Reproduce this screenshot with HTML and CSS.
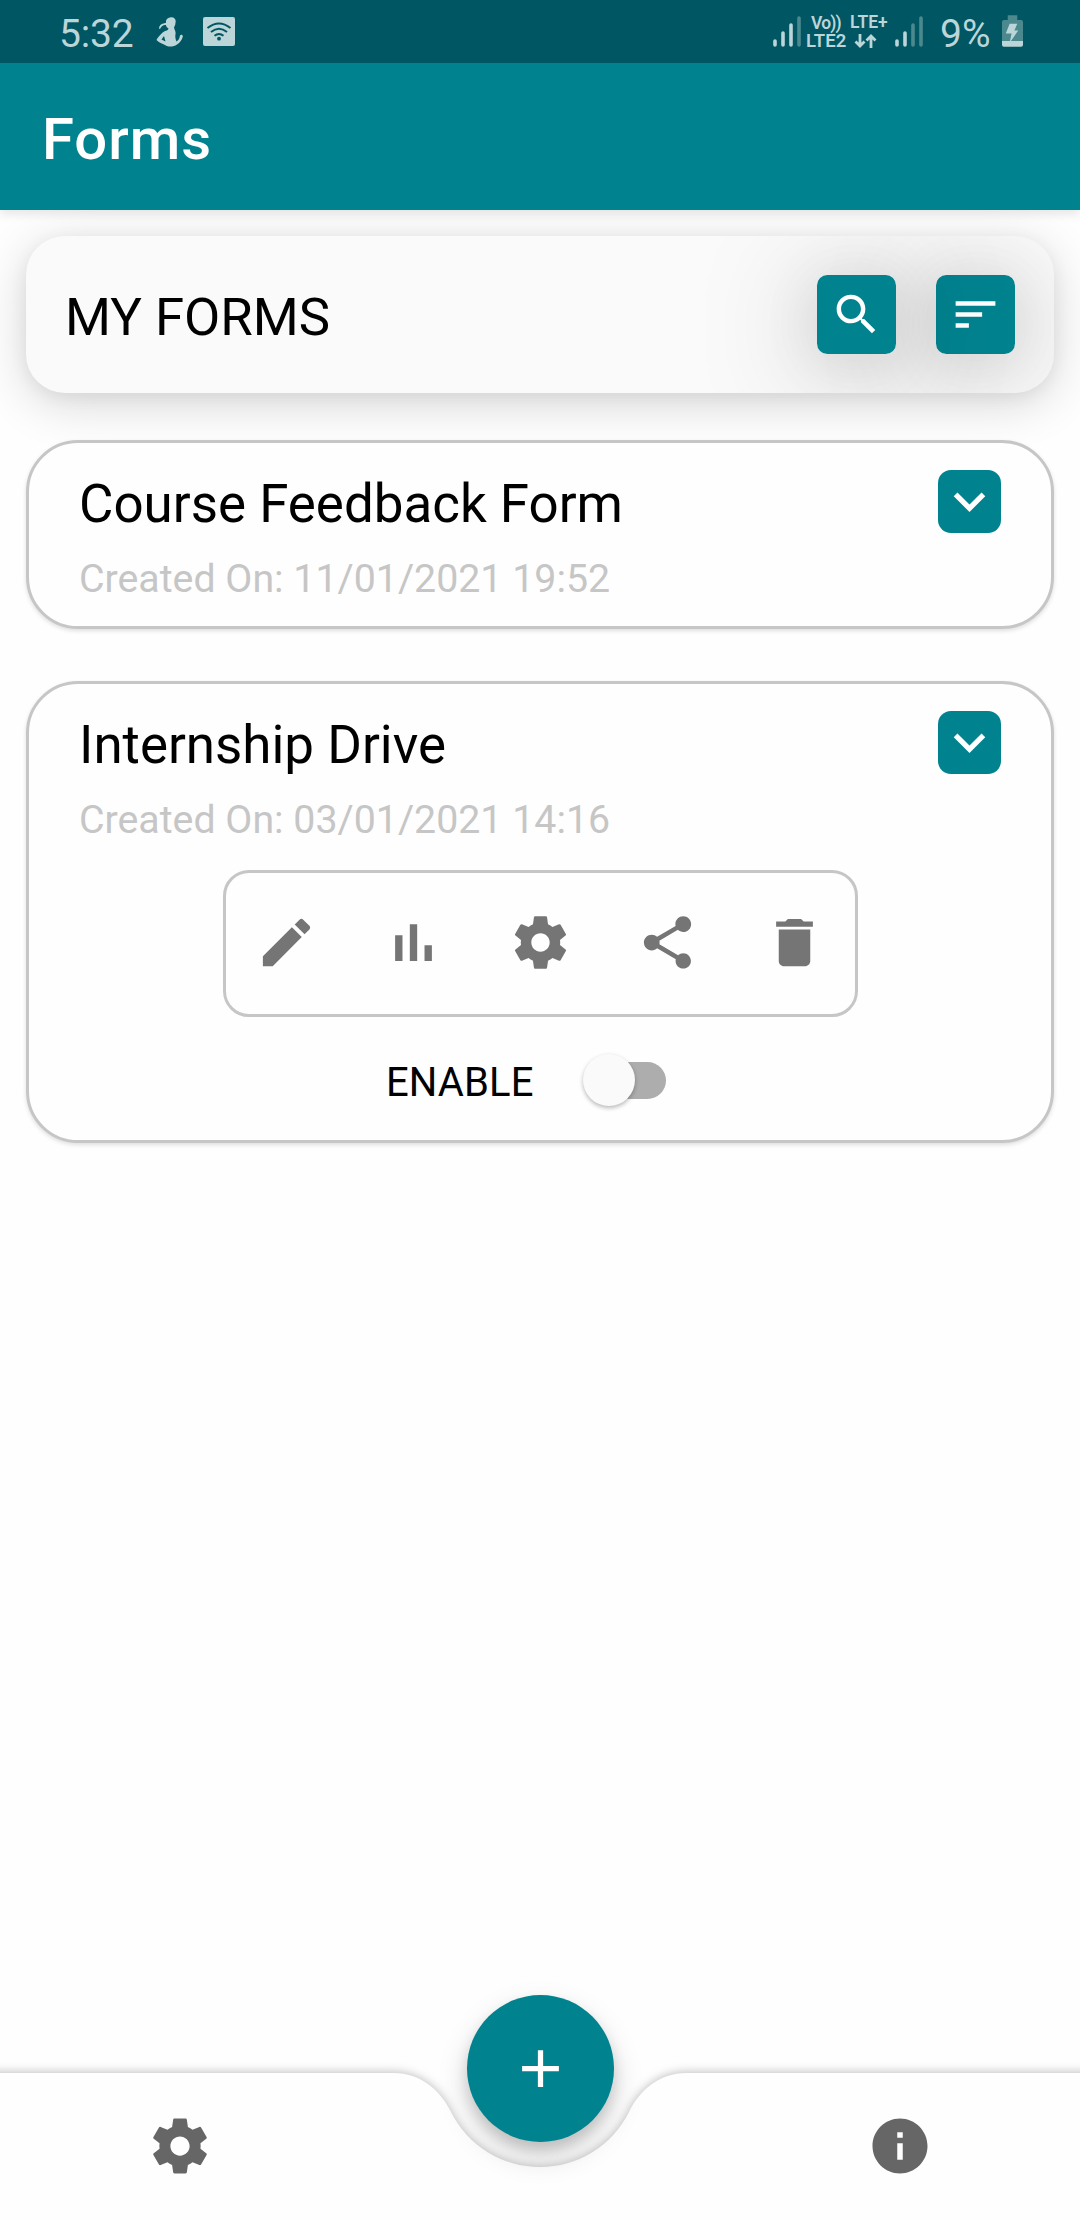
FILE: index.html
```html
<!DOCTYPE html>
<html lang="en">
<head>
<meta charset="utf-8">
<title>Forms</title>
<link rel="stylesheet" href="styles.css">
</head>
<body>
<svg class="defs" aria-hidden="true">
  <symbol id="gear" viewBox="0 0 24 24"><path d="M19.43 12.98c.04-.32.07-.64.07-.98s-.03-.66-.07-.98l2.11-1.65c.19-.15.24-.42.12-.64l-2-3.46c-.12-.22-.39-.3-.61-.22l-2.49 1c-.52-.4-1.08-.73-1.69-.98l-.38-2.65C14.46 2.18 14.25 2 14 2h-4c-.25 0-.46.18-.49.42l-.38 2.65c-.61.25-1.17.59-1.69.98l-2.49-1c-.23-.09-.49 0-.61.22l-2 3.46c-.13.22-.07.49.12.64l2.11 1.65c-.04.32-.07.65-.07.98s.03.66.07.98l-2.11 1.65c-.19.15-.24.42-.12.64l2 3.46c.12.22.39.3.61.22l2.49-1c.52.4 1.08.73 1.69.98l.38 2.65c.03.24.24.42.49.42h4c.25 0 .46-.18.49-.42l.38-2.65c.61-.25 1.17-.59 1.69-.98l2.49 1c.23.09.49 0 .61-.22l2-3.46c.12-.22.07-.49-.12-.64l-2.11-1.65zM12 15.5c-1.93 0-3.5-1.57-3.5-3.5s1.57-3.5 3.5-3.5 3.5 1.57 3.5 3.5-1.57 3.5-3.5 3.5z"/></symbol>
  <symbol id="chevron" viewBox="0 0 24 24"><path d="M7.41 8.59 12 13.17l4.59-4.58L18 10l-6 6-6-6z"/></symbol>
</svg>
<div class="screen">
  <header class="status">
    <div class="status-left">
      <span class="clock">5:32</span>
      <svg class="fitness" viewBox="0 0 28 30"><path fill-rule="evenodd" d="M14 0.500C18 -.5 20.500 2.500 19.500 5.500 19.500 8 18.500 9 18 10.500 18.500 13 20 14 19.500 17 19 20 19.500 22 20.500 24.500 23 23 23.500 21 24 18.500 25 17 27 17.500 26.800 19.500 26 23 24 25.500 21 27.500 17 30.500 11 30 8 27.500 5 26 2 25 .5 23 2 20 6 15.500 9 14 10.500 13.500 12 13.500 12.500 11.500 11 10.500 10 9.500 10 8 7.500 7.500 5.500 9 4 12 2.500 12 3 9 5 7.500 7 6.500 8.500 6 10 6 9.500 3 11 1 14 .5ZM8 19 5.500 22.500 9.500 24.500Z"/></svg>
      <svg class="wifi" viewBox="0 0 32 29"><rect width="32" height="29" rx="2"/><g><path d="M4.500 11q11.500-9 23 0M8 15q8-6.500 16 0M11.500 18.700q4.500-3.500 9 0"/></g><circle cx="16" cy="21.700" r="1.900"/></svg>
    </div>
    <div class="status-right">
      <svg class="bars" viewBox="0 0 28 31"><path d="M2 25v4M10 17v12M18 9v20"/><path class="dim" d="M26 2v27"/></svg>
      <div class="net">
        <span class="volte">Vo))</span><span>LTE+</span>
        <span class="lte2">LTE2</span><svg viewBox="0 0 24 16"><path d="M6 1v12M1.500 8.500 6 13l4.500-4.500M17 15V3M12.500 7.500 17 3l4.500 4.500"/></svg>
      </div>
      <svg class="bars bars-two" viewBox="0 0 28 31"><path d="M2 25v4M10 17v12"/><path class="dim" d="M18 9v20M26 2v27"/></svg>
      <span class="percent">9%</span>
      <svg class="battery" viewBox="0 0 22 34"><path class="dim-fill" d="M6 0h10v5h4q2 0 2 2v20H0V7q0-2 2-2h4z"/><path d="M0 27h22v4q0 2-2 2H2q-2 0-2-2zM8 9h8l-3 7h4L8 29l2-10H4z"/></svg>
    </div>
  </header>
  <div class="appbar"><h1>Forms</h1></div>
  <main>
    <section class="heading">
      <h2>MY FORMS</h2>
      <button class="tool"><svg viewBox="0 0 24 24"><path d="M15.500 14h-.79l-.28-.27A6.471 6.471 0 0 0 16 9.500 6.500 6.500 0 1 0 9.500 16c1.610 0 3.090-.59 4.230-1.570l.27.28v.79l5 4.990L20.490 19l-4.990-5zm-6 0C7.010 14 5 11.990 5 9.500S7.010 5 9.500 5 14 7.010 14 9.500 11.990 14 9.500 14z"/></svg></button>
      <button class="tool"><svg viewBox="0 0 24 24"><path d="M3 18h6v-2H3v2zM3 6v2h18V6H3zm0 7h12v-2H3v2z"/></svg></button>
    </section>
    <article class="card">
      <div class="info"><h3>Course Feedback Form</h3><p>Created On: 11/01/2021 19:52</p></div>
      <button class="expand"><svg><use href="#chevron"/></svg></button>
    </article>
    <article class="card open">
      <div class="info"><h3>Internship Drive</h3><p>Created On: 03/01/2021 14:16</p></div>
      <button class="expand"><svg><use href="#chevron"/></svg></button>
      <div class="actions">
        <svg viewBox="0 0 24 24"><path d="M3 17.250V21h3.750L17.810 9.940l-3.750-3.750L3 17.250zM20.710 7.040c.39-.39.39-1.020 0-1.410l-2.340-2.340c-.39-.39-1.020-.39-1.410 0l-1.830 1.830 3.750 3.750 1.830-1.830z"/></svg>
        <svg viewBox="0 0 24 24"><path d="M5 9.200h2.800V19H5zM10.600 5h2.800v14h-2.800zm5.600 8H19v6h-2.800z"/></svg>
        <svg><use href="#gear"/></svg>
        <svg viewBox="0 0 24 24"><path d="M18 16.080c-.76 0-1.440.3-1.960.77L8.910 12.700c.05-.23.09-.46.09-.7s-.04-.47-.09-.7l7.050-4.110c.54.5 1.250.81 2.040.81 1.660 0 3-1.340 3-3s-1.340-3-3-3-3 1.340-3 3c0 .24.04.47.09.7L8.040 9.810C7.500 9.310 6.790 9 6 9c-1.660 0-3 1.340-3 3s1.340 3 3 3c.79 0 1.500-.31 2.040-.81l7.120 4.160c-.05.21-.08.43-.08.65 0 1.610 1.310 2.920 2.920 2.920s2.920-1.310 2.920-2.920-1.310-2.920-2.920-2.920z"/></svg>
        <svg viewBox="0 0 24 24"><path d="M6 19c0 1.100.9 2 2 2h8c1.100 0 2-.9 2-2V7H6v12zM19 4h-3.500l-1-1h-5l-1 1H5v2h14V4z"/></svg>
      </div>
      <div class="toggle"><span>ENABLE</span><div class="switch"><i></i></div></div>
    </article>
  </main>
  <nav>
    <svg class="notch" viewBox="0 0 1080 147"><path d="M-20 0H394C420 0 440.500 17 451 39A99.500 99.500 0 0 0 629 39C639.500 17 660 0 686 0H1100V160H-20Z"/></svg>
    <svg class="nav-icon"><use href="#gear"/></svg>
    <svg class="nav-icon" viewBox="0 0 24 24"><path d="M12 2C6.480 2 2 6.480 2 12s4.480 10 10 10 10-4.480 10-10S17.520 2 12 2zm1 15h-2v-6h2v6zm0-8h-2V7h2v2z"/></svg>
    <button class="fab"><svg viewBox="0 0 24 24"><path d="M19 13h-6v6h-2v-6H5v-2h6V5h2v6h6z"/></svg></button>
  </nav>
</div>
</body>
</html>
```
FILE: styles.css
```css
* { box-sizing: border-box; }
body { margin: 0; background: #fefefe; font-family: Roboto, sans-serif; color: #000; }
h1, h2, h3, p { margin: 0; font-weight: 400; }
button { border: 0; padding: 0; display: grid; place-items: center; background: #00838f; fill: #fff; }
.defs { position: absolute; width: 0; height: 0; }
.screen { width: 1080px; height: 2220px; display: flex; flex-direction: column; overflow: hidden; }

.status { height: 63px; flex: none; padding: 0 57px 0 59px; background: #005662; color: #bbd5d8; fill: #bbd5d8; display: flex; justify-content: space-between; position: relative; z-index: 2; }
.status-left, .status-right { display: flex; align-items: flex-start; }
.clock, .percent { font-size: 39px; line-height: 46px; padding-top: 11px; }
.clock { width: 97px; letter-spacing: -.2px; }
.fitness { width: 28px; height: 30px; margin: 17px 19px 0 0; }
.wifi { width: 32px; height: 29px; margin-top: 17px; }
.wifi g { stroke: #005662; stroke-width: 2; fill: none; }
.wifi circle { fill: #005662; }
.bars { width: 28px; height: 31px; margin-top: 16px; stroke: #bbd5d8; stroke-width: 3.600; stroke-linecap: round; fill: none; }
.dim { stroke: #4b898f; }
.dim-fill { fill: #4b898f; }
.net { display: grid; grid-template-columns: 42px 38px; grid-template-rows: 18px 18px; column-gap: 2px; margin: 13px 1px 0 5px; font-size: 17.500px; font-weight: 600; line-height: 18px; white-space: nowrap; }
.net .volte { padding: 1px 0 0 5px; letter-spacing: -.8px; }
.net .lte2 { font-size: 18.500px; line-height: 20px; }
.net svg { width: 24px; height: 16px; margin: 2px 0 0 4px; stroke: #bbd5d8; stroke-width: 2.800; fill: none; }
.bars-two { margin-left: 6px; }
.percent { width: 62px; margin-left: 17px; }
.battery { width: 21px; height: 33px; margin: 15px 0 0; }

.appbar { height: 147px; flex: none; padding-left: 42px; background: #00838f; color: #fff; display: flex; align-items: center; box-shadow: 0 4px 10px rgba(0,0,0,.1); position: relative; z-index: 1; }
h1 { font-size: 58px; font-weight: 500; letter-spacing: 1px; line-height: 68px; padding-top: 4px; }

main { flex: 1; padding: 26px 26px 0; }
.heading { height: 157px; border-radius: 39px; padding: 0 39px; display: flex; align-items: center; gap: 40px; background: #fafafa; overflow: hidden; box-shadow: 0 10px 50px rgba(0,0,0,.16), 0 4px 18px rgba(0,0,0,.06); }
h2 { flex: 1; font-size: 52.700px; line-height: 62px; padding-top: 4px; }
.tool { width: 79px; height: 79px; border-radius: 10.500px; box-shadow: 0 12px 120px rgba(0,0,0,.28), 0 6px 60px rgba(0,0,0,.09); position: relative; }
.tool:first-of-type { z-index: 1; }
.tool svg { width: 53px; height: 53px; }

.card { position: relative; margin-top: 47px; height: 189px; border: 3px solid #c6c6c6; border-radius: 52px; padding: 27px 50px 0; display: grid; grid-template-columns: 1fr 63px; align-content: start; background: #fefefe; box-shadow: 0 2px 4px rgba(0,0,0,.13); }
.card.open { margin-top: 52px; height: 462px; }
h3 { font-size: 52.900px; line-height: 62px; margin-top: 3px; }
.info p { font-size: 39.300px; line-height: 46px; color: #c6c6c6; margin-top: 21px; }
.expand { width: 63px; height: 63px; border-radius: 13px; }
.expand svg { width: 63px; height: 63px; }
.actions { grid-column: 1 / -1; justify-self: center; width: 635px; height: 147px; margin-top: 27px; border: 3px solid #c6c6c6; border-radius: 26px; display: grid; grid-template-columns: repeat(5, 127px); justify-content: center; place-items: center; padding-bottom: 2px; }
.actions svg { width: 63px; height: 63px; fill: #757575; }
.toggle { grid-column: 1 / -1; display: flex; align-items: center; height: 127px; padding-left: 307px; font-size: 40px; }
.toggle span { width: 204px; letter-spacing: .1px; padding-top: 3px; }
.switch { width: 76px; height: 37px; border-radius: 19px; background: #adadad; }
.switch i { display: block; width: 52px; height: 52px; margin: -8px 0 0 -7px; border-radius: 50%; background: #fafafa; box-shadow: 0 2px 4px rgba(0,0,0,.28); }

nav { height: 147px; flex: none; position: relative; display: grid; grid-template-columns: 360px 1fr 360px; align-items: center; justify-items: center; }
.notch { position: absolute; inset: 0; width: 1080px; height: 147px; overflow: visible; fill: #fefefe; filter: drop-shadow(0 -1px 5px rgba(0,0,0,.25)); }
.nav-icon { position: relative; width: 66px; height: 66px; fill: #666; margin-bottom: 2px; }
.nav-icon + .nav-icon { grid-column: 3; }
.fab { position: absolute; left: 467px; top: -78px; width: 147px; height: 147px; border-radius: 50%; box-shadow: 0 14px 30px rgba(0,0,0,.17), 0 8px 14px rgba(0,0,0,.13); }
.fab svg { width: 63px; height: 63px; }
```
